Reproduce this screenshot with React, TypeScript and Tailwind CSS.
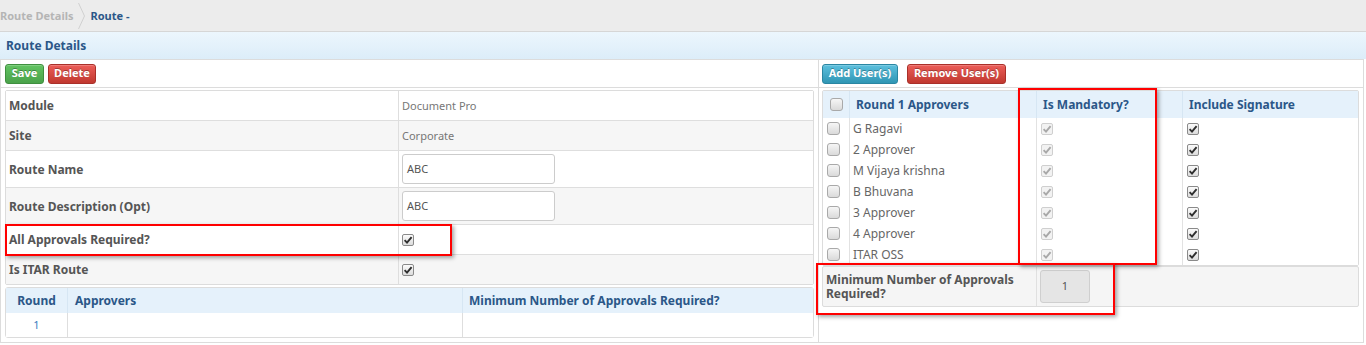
import React from "react";

type CbKind = "empty" | "checked" | "disabled";

function Cb({ kind }: { kind: CbKind }) {
  if (kind === "empty") {
    return (
      <span className="inline-block w-[13px] h-[13px] rounded-[3px] border border-[#a9a9a9] bg-gradient-to-b from-[#f6f6f6] to-[#dadada] shrink-0" />
    );
  }
  const dis = kind === "disabled";
  return (
    <span
      className={
        dis
          ? "inline-flex items-center justify-center w-[12px] h-[12px] rounded-[2px] border border-[#cfcfcf] bg-[#f2f2f2] shrink-0"
          : "inline-flex items-center justify-center w-[12px] h-[12px] rounded-[2px] border border-[#8a8a8a] bg-gradient-to-b from-[#fbfbfb] to-[#dcdcdc] shrink-0"
      }
    >
      <svg width="10" height="10" viewBox="0 0 10 10">
        <path
          d="M1.6 5.2 L4 7.6 L8.6 2.2"
          fill="none"
          stroke={dis ? "#a8a8a8" : "#2e2e2e"}
          strokeWidth="1.9"
        />
      </svg>
    </span>
  );
}

function Btn({ color, children, w }: { color: "green" | "red" | "blue"; children: React.ReactNode; w: string }) {
  const c =
    color === "green"
      ? "from-[#62c462] to-[#4aa24a] border-[#3f8f3f]"
      : color === "red"
      ? "from-[#ec5d58] to-[#c0382f] border-[#a9302a]"
      : "from-[#5bc0de] to-[#2f96b4] border-[#2a86a2]";
  return (
    <span
      className={`inline-flex items-center justify-center h-[20px] ${w} rounded-[3px] border bg-gradient-to-b ${c} text-white text-[11px] font-bold [text-shadow:0_-1px_0_rgba(0,0,0,0.3)] shadow-[inset_0_1px_0_rgba(255,255,255,0.2)]`}
    >
      {children}
    </span>
  );
}

const leftRows: { label: string; h: string; bg: string; kind: "text" | "input" | "cb"; value?: string; last?: boolean }[] = [
  { label: "Module", h: "h-[30px]", bg: "bg-white", kind: "text", value: "Document Pro" },
  { label: "Site", h: "h-[30px]", bg: "bg-[#f6f6f6]", kind: "text", value: "Corporate" },
  { label: "Route Name", h: "h-[37px]", bg: "bg-white", kind: "input", value: "ABC" },
  { label: "Route Description (Opt)", h: "h-[37px]", bg: "bg-[#f6f6f6]", kind: "input", value: "ABC" },
  { label: "All Approvals Required?", h: "h-[30px]", bg: "bg-white", kind: "cb" },
  { label: "Is ITAR Route", h: "h-[29px]", bg: "bg-[#f6f6f6]", kind: "cb", last: true },
];

const approvers = ["G Ragavi", "2 Approver", "M Vijaya krishna", "B Bhuvana", "3 Approver", "4 Approver", "ITAR OSS"];

export default function App() {
  return (
    <div className="relative w-[1366px] h-[345px] overflow-hidden bg-white font-['Noto_Sans',sans-serif]">
      {/* breadcrumb */}
      <div className="h-[32px] bg-[#ececec] border-b border-[#d6d6d6] flex items-center">
        <span className="text-[11px] font-bold text-[#b5b5b5] pt-[1px]">Route Details</span>
        <svg width="8" height="26" viewBox="0 0 8 26" className="ml-[4px] mr-[5px]">
          <path d="M0.5 0 L6.5 13 L0.5 26" fill="none" stroke="#d0d0d0" strokeWidth="1" />
        </svg>
        <span className="text-[11px] font-bold text-[#2b5788] pt-[1px]">Route -</span>
      </div>
      {/* panel header */}
      <div className="h-[27px] bg-gradient-to-b from-[#ecf6fd] to-[#dcedf9] flex items-center pl-[6px]">
        <span className="text-[12px] font-bold text-[#2b5788] pt-[1px]">Route Details</span>
      </div>
      {/* body */}
      <div className="w-[1364px] h-[284px] border border-[#dcdcdc] flex">
        {/* left column */}
        <div className="w-[818px] border-r border-[#dcdcdc] flex flex-col">
          <div className="h-[28px] border-b border-[#dcdcdc] flex items-center pl-[4px] gap-[4px]">
            <Btn color="green" w="w-[39px]">Save</Btn>
            <Btn color="red" w="w-[48px]">Delete</Btn>
          </div>
          <div className="mt-[2px] mx-[4px] border border-[#dcdcdc] rounded-[2px] flex flex-col">
            {leftRows.map((r) => (
              <div key={r.label} className={`${r.h} ${r.bg} flex ${r.last ? "" : "border-b border-[#dedede]"}`}>
                <div className="w-[393px] border-r border-[#dedede] flex items-center pl-[3px] pt-[1px] text-[12px] font-bold text-[#555]">
                  {r.label}
                </div>
                <div className="flex-1 flex items-center pl-[3px]">
                  {r.kind === "text" && <span className="text-[11px] text-[#777] pt-[1px]">{r.value}</span>}
                  {r.kind === "input" && (
                    <span className="w-[153px] h-[30px] rounded-[3px] border border-[#cccccc] bg-white flex items-center pl-[4px] pt-[1px] text-[11px] text-[#555]">
                      {r.value}
                    </span>
                  )}
                  {r.kind === "cb" && <Cb kind="checked" />}
                </div>
              </div>
            ))}
          </div>
          <div className="mt-[2px] mx-[4px] border border-[#dcdcdc] rounded-[3px] flex flex-col">
            <div className="h-[25px] bg-[#e5f1fb] flex text-[12px] font-bold text-[#2b5788]">
              <div className="w-[62px] border-r border-[#d6e6f3] flex items-center justify-center pt-[1px]">Round</div>
              <div className="w-[395px] border-r border-[#d6e6f3] flex items-center pl-[7px] pt-[1px]">Approvers</div>
              <div className="flex-1 flex items-center pl-[6px] pt-[1px]">Minimum Number of Approvals Required?</div>
            </div>
            <div className="h-[24px] bg-white flex">
              <div className="w-[62px] border-r border-[#dedede] flex items-center justify-center text-[11px] text-[#3a7cc0] pt-[1px]">1</div>
              <div className="w-[395px] border-r border-[#dedede]" />
              <div className="flex-1" />
            </div>
          </div>
        </div>
        {/* right column */}
        <div className="flex-1 flex flex-col">
          <div className="h-[28px] border-b border-[#dcdcdc] flex items-center pl-[3px] gap-[9px]">
            <Btn color="blue" w="w-[76px]">Add User(s)</Btn>
            <Btn color="red" w="w-[99px]">Remove User(s)</Btn>
          </div>
          <div className="mt-[2px] ml-[3px] mr-[4px] border border-[#dcdcdc] rounded-[2px] flex flex-col">
            <div className="h-[27px] bg-[#e5f1fb] flex text-[12px] font-bold text-[#2b5788]">
              <div className="w-[27px] border-r border-[#d6e6f3] flex items-center pl-[7px]">
                <Cb kind="empty" />
              </div>
              <div className="w-[187px] border-r border-[#d6e6f3] flex items-center pl-[6px] pt-[1px]">Round 1 Approvers</div>
              <div className="w-[146px] border-r border-[#d6e6f3] flex items-center pl-[6px] pt-[1px]">Is Mandatory?</div>
              <div className="flex-1 flex items-center pl-[6px] pt-[1px]">Include Signature</div>
            </div>
            {approvers.map((n) => (
              <div key={n} className="h-[21px] flex bg-white">
                <div className="w-[27px] border-r border-[#e2e2e2] flex items-center pl-[4px]">
                  <Cb kind="empty" />
                </div>
                <div className="w-[187px] border-r border-[#e2e2e2] flex items-center pl-[3px] pt-[1px] text-[12px] text-[#666]">{n}</div>
                <div className="w-[146px] border-r border-[#e2e2e2] flex items-center pl-[4px]">
                  <Cb kind="disabled" />
                </div>
                <div className="flex-1 flex items-center pl-[4px]">
                  <Cb kind="checked" />
                </div>
              </div>
            ))}
          </div>
          <div className="ml-[3px] mr-[4px] h-[41px] border border-[#dcdcdc] rounded-[2px] bg-[#f5f5f5] flex">
            <div className="w-[214px] border-r border-[#e0e0e0] flex items-center pl-[3px] pt-[1px] text-[12px] leading-[14px] font-bold text-[#555]">
              Minimum Number of Approvals Required?
            </div>
            <div className="flex-1 flex items-center pl-[3px]">
              <span className="w-[50px] h-[33px] rounded-[3px] border border-[#cfcfcf] bg-[#e5e5e5] flex items-center justify-center text-[11px] text-[#555]">
                1
              </span>
            </div>
          </div>
        </div>
      </div>
      {/* red annotation boxes */}
      <div className="absolute left-[5px] top-[224px] w-[447px] h-[32px] border-2 border-[#f00] shadow-[2px_2px_4px_rgba(0,0,0,0.35)]" />
      <div className="absolute left-[1018px] top-[88px] w-[139px] h-[177px] border-2 border-[#f00] shadow-[2px_2px_4px_rgba(0,0,0,0.35)]" />
      <div className="absolute left-[816px] top-[263px] w-[299px] h-[52px] border-2 border-[#f00] shadow-[2px_2px_4px_rgba(0,0,0,0.35)]" />
    </div>
  );
}
